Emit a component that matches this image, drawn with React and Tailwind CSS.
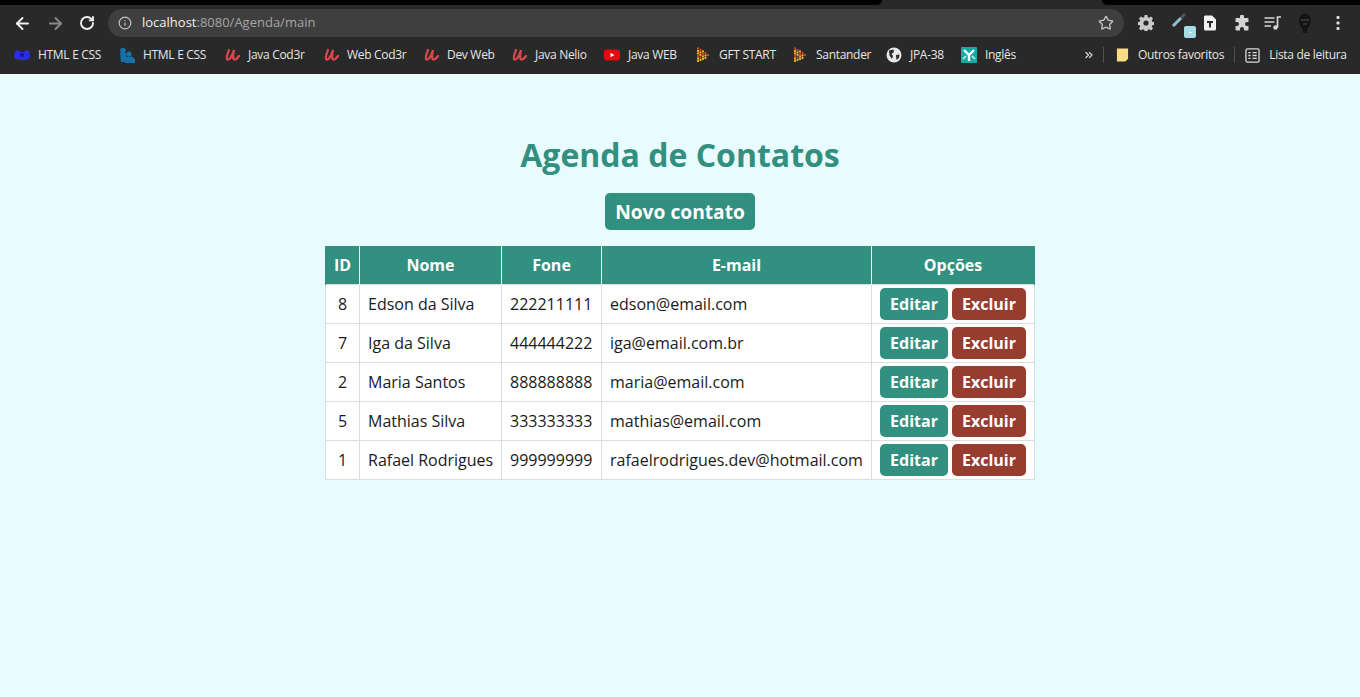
import React from 'react';
import { ArrowLeft, ArrowRight, RotateCw, Info, Star, ChevronsRight } from 'lucide-react';

const Udemy = () => (
  <svg viewBox="0 0 16 16" className="h-4 w-4 shrink-0" fill="none" stroke="#d9474e" strokeWidth="2.3" strokeLinecap="round">
    <path d="M5 3 C4 6 1.5 11 3.5 12.5 C5.5 13.5 8 9 10 3 C9 7 8.5 12 10.5 12.5 C12 12.8 13.5 11 15 9" />
  </svg>
);

const dots = [
  [3, 1.5], [3, 4], [3, 6.5], [3, 9], [3, 11.5], [3, 14],
  [5.5, 3], [5.5, 5.5], [5.5, 8], [5.5, 10.5], [5.5, 13],
  [8, 4.5], [8, 7], [8, 9.5], [8, 12],
  [10.5, 6], [10.5, 8.5], [10.5, 11],
  [13, 8],
];

const PlayDots = () => (
  <svg viewBox="0 0 16 16" className="h-4 w-4 shrink-0">
    {dots.map(([x, y], i) => (
      <circle key={i} cx={x} cy={y} r="1.15" fill={i % 3 === 0 ? '#c9452a' : '#eeb12f'} />
    ))}
  </svg>
);

const Youtube = () => (
  <svg viewBox="0 0 16 16" className="h-4 w-4 shrink-0">
    <rect x="0" y="2.5" width="16" height="11" rx="3" fill="#e8080f" />
    <path d="M6.5 5.8 L10.5 8 L6.5 10.2 Z" fill="#fff" />
  </svg>
);

const BlueBlob = () => (
  <svg viewBox="0 0 16 16" className="h-4 w-4 shrink-0">
    <path d="M1 4 L4 3 L6 5 L10 5 L12 3 L15 4 L16 9 C16 12 13 13 8 13 C3 13 0 12 0 9 Z" fill="#2a2ce8" />
    <circle cx="8" cy="8" r="2" fill="#1412a8" />
  </svg>
);

const BluePeople = () => (
  <svg viewBox="0 0 16 16" className="h-4 w-4 shrink-0" fill="#1673a8">
    <circle cx="4" cy="3.5" r="2.8" />
    <circle cx="10" cy="7" r="2.6" />
    <path d="M1 6 L7 6 L8 15 L2 15 Z" />
    <path d="M6 10 L13 9.5 L16 12 L16 16 L6 16 Z" />
  </svg>
);

const Globe = () => (
  <svg viewBox="0 0 16 16" className="h-4 w-4 shrink-0">
    <circle cx="8" cy="8" r="7.5" fill="#e8e8e8" />
    <path d="M3 3.5 L7.5 2.5 L8 5 L5.5 7 L7 9 L6 12 L3.5 8.5 Z M10 8 L13.5 7.5 L13 11 L10.5 13 Z" fill="#2a2a2a" />
  </svg>
);

const Lang = () => (
  <svg viewBox="0 0 16 16" className="h-4 w-4 shrink-0">
    <rect width="16" height="16" rx="1" fill="#17a8a8" />
    <path d="M3 3 L8 8 L13 3 M8 8 L8 14" stroke="#fff" strokeWidth="2.4" fill="none" />
    <path d="M2 12 L5 9 M14 12 L11 9" stroke="#d6f2f2" strokeWidth="1.5" />
  </svg>
);

const bookmarks = [
  { label: 'HTML E CSS', icon: <BlueBlob />, w: 'w-[105px]' },
  { label: 'HTML E CSS', icon: <BluePeople />, w: 'w-[105px]' },
  { label: 'Java Cod3r', icon: <Udemy />, w: 'w-[99px]' },
  { label: 'Web Cod3r', icon: <Udemy />, w: 'w-[100px]' },
  { label: 'Dev Web', icon: <Udemy />, w: 'w-[88px]' },
  { label: 'Java Nelio', icon: <Udemy />, w: 'w-[93px]' },
  { label: 'Java WEB', icon: <Youtube />, w: 'w-[91px]' },
  { label: 'GFT START', icon: <PlayDots />, w: 'w-[97px]' },
  { label: 'Santander', icon: <PlayDots />, w: 'w-[94px]' },
  { label: 'JPA-38', icon: <Globe />, w: 'w-[75px]' },
  { label: 'Inglês', icon: <Lang />, w: 'w-[116px]' },
];

const contatos = [
  { id: 8, nome: 'Edson da Silva', fone: '222211111', email: 'edson@email.com' },
  { id: 7, nome: 'Iga da Silva', fone: '444444222', email: 'iga@email.com.br' },
  { id: 2, nome: 'Maria Santos', fone: '888888888', email: 'maria@email.com' },
  { id: 5, nome: 'Mathias Silva', fone: '333333333', email: 'mathias@email.com' },
  { id: 1, nome: 'Rafael Rodrigues', fone: '999999999', email: 'rafaelrodrigues.dev@hotmail.com' },
];

const BrowserBar = () => (
  <div className="h-[74px] bg-[#292929] font-['Open_Sans',sans-serif]">
    <div className="flex h-[5px] justify-between">
      <div className="h-[5px] w-[882px] rounded-br-[5px] bg-black" />
      <div className="h-[5px] w-[258px] rounded-bl-[5px] bg-black" />
    </div>
    <div className="flex h-[36px] items-center">
      <div className="flex w-[108px] items-center gap-[14px] pl-[13px]">
        <ArrowLeft className="h-[19px] w-[19px] text-[#f0f0f0]" strokeWidth={2.4} />
        <ArrowRight className="h-[19px] w-[19px] text-[#8a8a8a]" strokeWidth={2.4} />
        <RotateCw className="h-[16px] w-[16px] text-[#f0f0f0]" strokeWidth={2.8} />
      </div>
      <div className="flex h-[28px] w-[1016px] items-center rounded-full bg-[#3f3f3f] pl-[10px] pr-[10px]">
        <Info className="h-[14px] w-[14px] text-[#c4c4c4]" />
        <div className="ml-[10px] flex-1 pb-[2px] text-[13px] leading-none text-[#a5a5a5]">
          <span className="text-[#f0f0f0]">localhost</span>:8080/Agenda/main
        </div>
        <Star className="h-[16px] w-[16px] text-[#c4c4c4]" />
      </div>
      <div className="flex flex-1 items-center pl-[14px]">
        <svg viewBox="0 0 16 16" className="h-[16px] w-[16px] text-[#c9c9c9]" fill="currentColor">
          <path d="M6.6 0h2.8l.4 2.2 1.3.6 1.9-1.3 2 2-1.3 1.9.6 1.3 2.2.4v2.8l-2.2.4-.6 1.3 1.3 1.9-2 2-1.9-1.3-1.3.6-.4 2.2H6.6l-.4-2.2-1.3-.6L3 15.5l-2-2 1.3-1.9-.6-1.3L-.5 9.9V7.1l2.2-.4.6-1.3L1 3.5l2-2 1.9 1.3 1.3-.6z" />
          <circle cx="8" cy="8" r="2.6" fill="#292929" />
        </svg>
        <div className="relative ml-[17px] h-[24px] w-[24px]">
          <svg viewBox="0 0 24 24" className="h-[24px] w-[24px]">
            <path d="M2 15 L10 7" stroke="#8fc4d6" strokeWidth="3" />
            <path d="M10 7 L14 3" stroke="#555" strokeWidth="3" />
          </svg>
          <div className="absolute bottom-[-3px] right-[-1px] flex h-[12px] w-[12px] items-center justify-center rounded-[2px] bg-[#a5dde6]">
            <div className="h-[1px] w-[3px] bg-white" />
          </div>
        </div>
        <svg viewBox="0 0 16 16" className="ml-[7px] h-[16px] w-[16px]">
          <path d="M3 0.5 H10 L14 4.5 V14 A1.5 1.5 0 0 1 12.5 15.5 H3.5 A1.5 1.5 0 0 1 2 14 V1.5 Z" fill="#f2f2f2" />
          <path d="M5 6 H11 V8 H9 V12.5 H7 V8 H5 Z" fill="#292929" />
        </svg>
        <svg viewBox="0 0 16 16" className="ml-[16px] h-[16px] w-[16px] text-[#d4d4d4]" fill="currentColor">
          <path d="M6 1.5a2 2 0 0 1 4 0V3h3.5a1 1 0 0 1 1 1v3H13a2 2 0 0 0 0 4h1.5v3.5a1 1 0 0 1-1 1H10V14a2 2 0 0 0-4 0v1.5H2.5a1 1 0 0 1-1-1V11H3a2 2 0 0 0 0-4H1.5V4a1 1 0 0 1 1-1H6z" />
        </svg>
        <svg viewBox="0 0 18 16" className="ml-[14px] h-[16px] w-[18px]" fill="none" stroke="#d8d8d8" strokeWidth="1.5">
          <path d="M0.5 3 H10.5 M0.5 7 H10.5 M0.5 11 H7" />
          <path d="M13.5 12.5 V2 H17" strokeWidth="1.7" />
          <circle cx="11.5" cy="12.5" r="2.2" fill="#d8d8d8" stroke="none" />
        </svg>
        <svg viewBox="0 0 18 20" className="ml-[14px] h-[20px] w-[18px]">
          <ellipse cx="9" cy="8" rx="6" ry="7.5" fill="#141414" />
          <path d="M5 7 H13 M7 11 H11" stroke="#3c3c3c" strokeWidth="1.3" />
          <path d="M6 14 H12 L11 20 H7 Z" fill="#141414" />
        </svg>
        <svg viewBox="0 0 4 16" className="ml-[22px] h-[16px] w-[4px]" fill="#e2e2e2">
          <rect x="0.5" y="1" width="3" height="3" rx="1" />
          <rect x="0.5" y="6.5" width="3" height="3" rx="1" />
          <rect x="0.5" y="12" width="3" height="3" rx="1" />
        </svg>
      </div>
    </div>
    <div className="flex h-[28px] items-center pl-[14px] text-[12px] text-[#e6e6e6]">
      {bookmarks.map((b, i) => (
        <div key={i} className={`flex items-center gap-[8px] ${b.w}`}>
          {b.icon}
          <span className="whitespace-nowrap tracking-[-0.3px]">{b.label}</span>
        </div>
      ))}
      <ChevronsRight className="ml-[6px] h-[12px] w-[12px] text-[#dcdcdc]" strokeWidth={2.4} />
      <div className="ml-[8px] h-[16px] w-[1px] bg-[#505050]" />
      <div className="ml-[12px] flex items-center gap-[9px]">
        <svg viewBox="0 0 14 16" className="h-[16px] w-[13px]">
          <path d="M1 1 H13 V12 L10 15 H1 Z" fill="#fbdc84" />
        </svg>
        <span className="whitespace-nowrap tracking-[-0.3px]">Outros favoritos</span>
      </div>
      <div className="ml-[10px] h-[16px] w-[1px] bg-[#505050]" />
      <div className="ml-[10px] flex items-center gap-[8px]">
        <svg viewBox="0 0 16 16" className="h-[15px] w-[15px]" fill="none" stroke="#d8d8d8" strokeWidth="1.4">
          <rect x="1" y="1" width="14" height="14" rx="1.5" />
          <path d="M3.5 5 H6 M3.5 8 H6 M3.5 11 H6 M8 5 H12.5 M8 8 H12.5 M8 11 H12.5" />
        </svg>
        <span className="ml-[1px] whitespace-nowrap tracking-[-0.3px]">Lista de leitura</span>
      </div>
    </div>
  </div>
);

const App = () => {
  return (
    <div className="h-[697px] overflow-hidden bg-[#e8fbff] font-['Open_Sans',sans-serif]">
      <BrowserBar />
      <main className="flex flex-col items-center pt-[56px]">
        <h1 className="text-[32px] font-bold leading-[50px] text-[#319080]">Agenda de Contatos</h1>
        <a className="mt-[13px] rounded-[5px] bg-[#319080] px-[10px] py-[5px] text-[19.2px] font-bold leading-[27px] text-white">
          Novo contato
        </a>
        <table className="mt-[16px] w-[709px] table-fixed border-collapse text-[16px] text-[#1a1a1a]">
          <colgroup>
            <col className="w-[34px]" />
            <col className="w-[142px]" />
            <col className="w-[100px]" />
            <col className="w-[270px]" />
            <col className="w-[163px]" />
          </colgroup>
          <thead>
            <tr className="h-[38px] bg-[#319080] text-white">
              <th className="border-x border-x-[#e8fbff] border-l-[#319080] font-bold">ID</th>
              <th className="border-x border-x-[#e8fbff] font-bold">Nome</th>
              <th className="border-x border-x-[#e8fbff] font-bold">Fone</th>
              <th className="border-x border-x-[#e8fbff] font-bold">E-mail</th>
              <th className="border-x border-x-[#e8fbff] border-r-[#319080] font-bold">Opções</th>
            </tr>
          </thead>
          <tbody>
            {contatos.map((c) => (
              <tr key={c.id} className="h-[39px] bg-white">
                <td className="border border-[#dddddd] text-center">{c.id}</td>
                <td className="whitespace-nowrap border border-[#dddddd] px-[8px]">{c.nome}</td>
                <td className="border border-[#dddddd] px-[8px]">{c.fone}</td>
                <td className="whitespace-nowrap border border-[#dddddd] px-[8px]">{c.email}</td>
                <td className="border border-[#dddddd] px-[8px]">
                  <div className="flex gap-[4px]">
                    <a className="flex h-[32px] w-[68px] items-center justify-center rounded-[5px] bg-[#319080] font-bold text-white">Editar</a>
                    <a className="flex h-[32px] w-[74px] items-center justify-center rounded-[5px] bg-[#963d30] font-bold text-white">Excluir</a>
                  </div>
                </td>
              </tr>
            ))}
          </tbody>
        </table>
      </main>
    </div>
  );
};

export default App;
